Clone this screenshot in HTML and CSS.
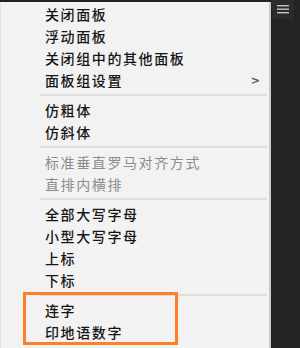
FILE: index.html
```html
<!DOCTYPE html>
<html lang="zh-CN">

<head>
    <meta charset="UTF-8">
    <title>面板菜单</title>
    <link rel="stylesheet" href="styles.css">
</head>

<body>
    <div class="screen">
        <div class="menu">
            <div class="item">关闭面板</div>
            <div class="item">浮动面板</div>
            <div class="item">关闭组中的其他面板</div>
            <div class="item has-sub">面板组设置<span class="chevron">&gt;</span></div>
            <div class="sep"></div>
            <div class="item">仿粗体</div>
            <div class="item">仿斜体</div>
            <div class="sep"></div>
            <div class="item disabled">标准垂直罗马对齐方式</div>
            <div class="item disabled">直排内横排</div>
            <div class="sep"></div>
            <div class="item">全部大写字母</div>
            <div class="item">小型大写字母</div>
            <div class="item">上标</div>
            <div class="item">下标</div>
            <div class="sep"></div>
            <div class="item">连字</div>
            <div class="item">印地语数字</div>

            <div class="highlight"></div>
        </div>

        <div class="side">
            <div class="menu-btn">
                <svg width="12" height="9" viewBox="0 0 12 9">
                    <rect x="0" y="0" width="12" height="1.4" fill="#c4c4c4" />
                    <rect x="0" y="3.5" width="12" height="1.4" fill="#c4c4c4" />
                    <rect x="0" y="7" width="12" height="1.4" fill="#c4c4c4" />
                </svg>
            </div>
        </div>
    </div>
</body>

</html>
```

FILE: styles.css
```css
body {
    margin: 0;
    background: #232323;
    font-family: "Noto Sans CJK SC", "Microsoft YaHei", sans-serif;
}

.screen {
    display: flex;
    height: 348px;
    overflow: hidden;
}

.menu {
    position: relative;
    width: 271px;
    margin-top: 2px;
    padding-top: 1px;
    background: #f2f2f2;
    border-right: 2px solid #c9c9c9;
    border-left: 1px solid #e2e2e2;
    box-sizing: border-box;
}

.item {
    display: flex;
    align-items: center;
    height: 22px;
    padding-left: 44px;
    font-size: 14px;
    font-weight: 500;
    letter-spacing: 1.6px;
    color: #161616;
    white-space: nowrap;
}

.item.disabled {
    color: #8c8c8c;
    font-weight: normal;
}

.chevron {
    margin-left: auto;
    margin-right: 9px;
    font-family: "DejaVu Sans", sans-serif;
    font-size: 11px;
    font-weight: bold;
    color: #555;
    letter-spacing: 0;
}

.sep {
    height: 8px;
    margin: 0 2px 0 39px;
    position: relative;
}

.sep::after {
    content: "";
    position: absolute;
    left: 0;
    right: 0;
    top: 3px;
    height: 2px;
    background: #dedede;
}

.highlight {
    position: absolute;
    left: 22px;
    top: 290px;
    width: 155px;
    height: 53px;
    border: 3px solid #ff7f27;
    box-sizing: border-box;
}

.side {
    flex: 1;
    background: #232323;
    padding-left: 1px;
}

.menu-btn {
    width: 22px;
    height: 19px;
    background: #2b2b2b;
    display: flex;
    align-items: center;
    justify-content: center;
}
```
